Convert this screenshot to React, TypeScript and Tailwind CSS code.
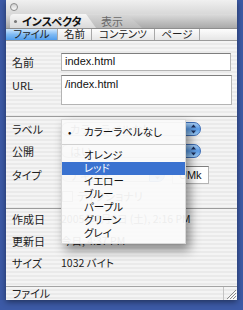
import React from "react";

const font = "font-['Noto_Sans_CJK_JP',sans-serif] [font-feature-settings:'palt']";
const latin = "font-['Liberation_Sans','Noto_Sans_CJK_JP',sans-serif]";
const stripes =
  "bg-[repeating-linear-gradient(180deg,#f4f4f4_0px,#f4f4f4_2px,#eaeaea_2px,#eaeaea_4px)]";

const PopupArrows = () => (
  <div className="w-[16px] h-full rounded-r-[7px] border border-[#3f6fb8] bg-gradient-to-b from-[#a9d0f7] via-[#5a9ce8] to-[#9fd0fb] flex items-center justify-center">
    <svg width="7" height="10" viewBox="0 0 7 10">
      <path d="M3.5 0.5 L6 3.5 L1 3.5 Z" fill="#1c2f5a" />
      <path d="M3.5 9.5 L6 6.5 L1 6.5 Z" fill="#1c2f5a" />
    </svg>
  </div>
);

const Popup = ({ text, w }: { text: string; w: string }) => (
  <div className={`flex h-[14px] ${w}`}>
    <div className="flex-1 h-full rounded-l-[7px] border border-r-0 border-[#9a9a9a] bg-gradient-to-b from-white to-[#e4e4e4] pl-[8px] text-[11px] leading-[12px] text-[#222]">
      {text}
    </div>
    <PopupArrows />
  </div>
);

const Segment = ({ label, w, active }: { label: string; w: string; active?: boolean }) => (
  <div
    className={`${w} h-full flex items-center justify-center border-r border-[#a8a8a8] text-[10.5px] leading-none text-[#222] ${
      active
        ? "bg-gradient-to-b from-[#cfe7fd] via-[#7fbaf3] to-[#4f9cec]"
        : "bg-gradient-to-b from-[#fdfdfd] to-[#e6e6e6]"
    }`}
  >
    {label}
  </div>
);

const Row = ({ label, children, h }: { label: string; children?: React.ReactNode; h: string }) => (
  <div className={`flex items-center ${h}`}>
    <div className="w-[55px] pl-[6px] text-[11px] leading-none text-[#222]">{label}</div>
    {children}
  </div>
);

const menuItems = ["オレンジ", "レッド", "イエロー", "ブルー", "パープル", "グリーン", "グレイ"];

export default function App() {
  return (
    <div className={`w-[243px] h-[310px] bg-[#3c5aa6] overflow-hidden relative ${font}`}>
      <div className="ml-[6px] w-[231px] h-[300px] flex flex-col bg-[#ececec] shadow-[0_2px_6px_rgba(0,0,0,0.45)]">
        {/* title bar */}
        <div className="h-[14px] bg-gradient-to-b from-[#f0f0f0] to-[#d8d8d8] flex items-center pl-[4px]">
          <div className="w-[8px] h-[8px] rounded-full border border-[#8c8c8c] bg-gradient-to-b from-[#d0d0d0] to-[#fafafa]" />
        </div>

        {/* tabs */}
        <div className="h-[15px] bg-gradient-to-b from-[#dcdcdc] to-[#a9a9a9] flex items-end pl-[4px] border-b border-[#8e8e8e]">
          <div className="relative z-10 w-[86px] h-[14px] rounded-tl-[4px] bg-gradient-to-b from-[#f6f6f6] to-[#dadada] [clip-path:polygon(0_0,76px_0,86px_100%,0_100%)] flex items-center">
            <div className="ml-[4px] w-[3px] h-[3px] rounded-full bg-[#777]" />
            <span className="ml-[5px] text-[11px] leading-none font-bold text-[#111]">インスペクタ</span>
          </div>
          <div className="-ml-[12px] w-[58px] h-[13px] bg-gradient-to-b from-[#d6d6d6] to-[#bababa] [clip-path:polygon(0_0,44px_0,58px_100%,0_100%)] flex items-center pl-[17px]">
            <span className="text-[11px] leading-none text-[#6a6a6a]">表示</span>
          </div>
        </div>

        {/* segmented */}
        <div className="h-[12px] flex border-b border-[#9a9a9a] bg-gradient-to-b from-[#fdfdfd] to-[#e6e6e6]">
          <Segment label="ファイル" w="w-[52px]" active />
          <Segment label="名前" w="w-[34px]" />
          <Segment label="コンテンツ" w="w-[63px]" />
          <Segment label="ページ" w="w-[45px]" />
        </div>

        {/* content */}
        <div className={`flex-1 flex flex-col ${stripes}`}>
          <div className="mt-[12px]">
            <Row label="名前" h="h-[18px]">
              <div className={`w-[170px] h-[18px] bg-white border border-[#b4b4b4] border-t-[#7e7e7e] px-[3px] pt-[1px] text-[11px] leading-[13px] text-[#111] ${latin}`}>
                index.html
              </div>
            </Row>
          </div>
          <div className="mt-[4px] flex">
            <div className="w-[55px] pl-[6px] pt-[5px] text-[11px] leading-none text-[#222]">URL</div>
            <div className={`w-[171px] h-[30px] bg-white border border-[#b4b4b4] border-t-[#7e7e7e] px-[3px] pt-[2px] text-[11px] leading-[13px] text-[#111] ${latin}`}>
              /index.html
            </div>
          </div>
          <div className="mt-[11px] h-px bg-[#9c9c9c]" />

          <div className="mt-[5px]">
            <Row label="ラベル" h="h-[14px]">
              <Popup text="カラーラベルなし" w="w-[140px]" />
            </Row>
          </div>
          <div className="mt-[8px]">
            <Row label="公開" h="h-[14px]">
              <Popup text="はい" w="w-[140px]" />
            </Row>
          </div>
          <div className="mt-[8px]">
            <Row label="タイプ" h="h-[18px]">
              <Popup text="テキスト" w="w-[104px]" />
              <div className={`ml-[7px] w-[37px] h-[18px] bg-white border border-[#b4b4b4] border-t-[#7e7e7e] pl-[6px] text-[11px] leading-[16px] text-[#111] ${latin}`}>
                UMk
              </div>
            </Row>
          </div>
          <div className="mt-[7px] flex items-center h-[11px] pl-[56px]">
            <div className="w-[11px] h-[11px] border border-[#8a8a8a] bg-white" />
            <span className="ml-[4px] text-[11px] leading-none text-[#222]">ディクショナリ</span>
          </div>
          <div className="mt-[6px] h-px bg-[#9c9c9c]" />

          <div className="mt-[3px]">
            <Row label="作成日" h="h-[14px]">
              <span className="text-[10.5px] leading-none text-[#222]">2005年7月9日 (土), 2:16 PM</span>
            </Row>
          </div>
          <div className="mt-[8px]">
            <Row label="更新日" h="h-[14px]">
              <span className="text-[10.5px] leading-none text-[#222]">今日, 4:37 PM</span>
            </Row>
          </div>
          <div className="mt-[8px]">
            <Row label="サイズ" h="h-[14px]">
              <span className="text-[10.5px] leading-none text-[#222]">1032 バイト</span>
            </Row>
          </div>
        </div>

        {/* footer */}
        <div className={`h-[14px] border-t border-[#a4a4a4] flex ${stripes}`}>
          <div className="flex-1 pl-[6px] flex items-center text-[11px] leading-none text-[#222]">ファイル</div>
          <div className="w-[14px] h-full border-l border-[#c4c4c4] flex items-end justify-end">
            <svg width="12" height="12" viewBox="0 0 12 12">
              <path d="M11 2 L2 11 M11 5 L5 11 M11 8 L8 11" stroke="#8a8a8a" strokeWidth="1" />
              <path d="M12 3 L3 12 M12 6 L6 12 M12 9 L9 12" stroke="#ffffff" strokeWidth="1" />
            </svg>
          </div>
        </div>
      </div>

      {/* open popup menu */}
      <div className="absolute left-[61px] top-[119px] w-[125px] h-[125px] bg-[rgba(250,250,250,0.94)] border border-[#d8d8d8] shadow-[4px_6px_10px_rgba(0,0,0,0.45)] py-[5px] text-[10.5px] leading-none text-[#111]">
        <div className="h-[14px] flex items-center">
          <span className="w-[22px] pl-[6px] text-[10px]">•</span>
          <span>カラーラベルなし</span>
        </div>
        <div className="h-[10px] flex items-center">
          <div className="w-full h-px bg-[#d0d0d0]" />
        </div>
        {menuItems.map((m) => (
          <div
            key={m}
            className={`h-[13px] flex items-center pl-[22px] ${m === "レッド" ? "bg-[#3a72d0] text-white" : ""}`}
          >
            {m}
          </div>
        ))}
      </div>
    </div>
  );
}
